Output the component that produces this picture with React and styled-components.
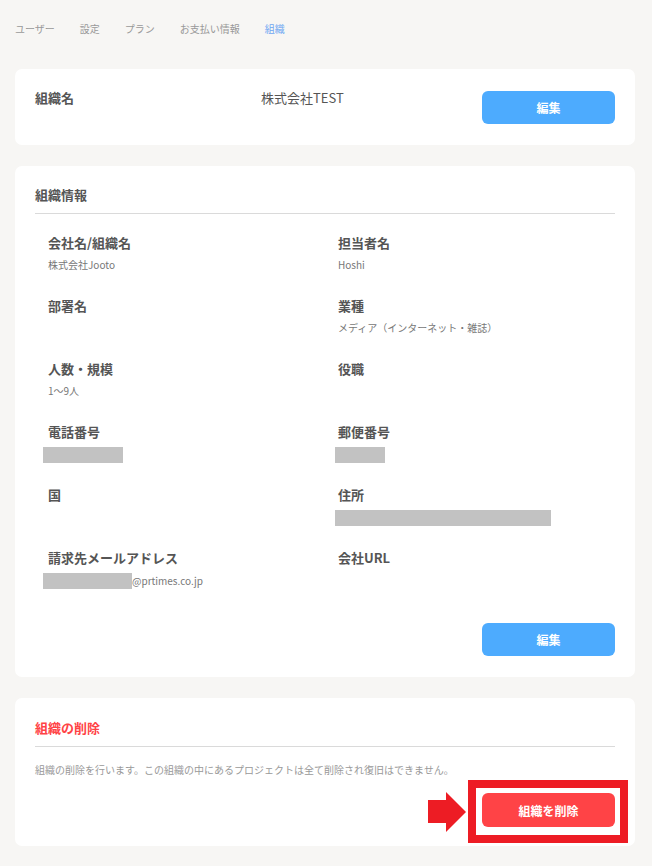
import React from 'react'
import styled, { createGlobalStyle } from 'styled-components'

const GlobalStyle = createGlobalStyle`
  body {
    margin: 0;
    background: #f7f6f4;
    font-family: "Noto Sans CJK JP", "Noto Sans", sans-serif;
    color: #555;
  }
`

const Page = styled.div`
  padding: 0 17px 21px 15px;
`

const Tabs = styled.nav`
  display: flex;
  height: 56px;
  align-items: center;
  font-size: 10px;
`

const Tab = styled.span`
  color: ${(p) => (p.$active ? '#6fa6f2' : '#999')};
  margin-right: ${(p) => p.$gap}px;
`

const Card = styled.section`
  background: #fff;
  border-radius: 7px;
  padding: ${(p) => p.$pad || '20px 20px 21px'};
  margin-top: ${(p) => p.$top || 21}px;
`

const NameRow = styled.div`
  display: flex;
  align-items: flex-start;
`

const NameLabel = styled.div`
  width: 226px;
  font-size: 13px;
  font-weight: 700;
  line-height: 18px;
  color: #555;
`

const NameValue = styled.div`
  flex: 1;
  font-size: 13px;
  line-height: 18px;
  color: #555;
`

const Button = styled.button`
  width: 133px;
  height: ${(p) => p.$h || 33}px;
  border: none;
  border-radius: 6px;
  background: ${(p) => (p.$danger ? '#ff4346' : '#4dabfe')};
  color: #fff;
  font-family: inherit;
  font-size: 12px;
  font-weight: 700;
  cursor: pointer;
`

const EditTop = styled(Button)`
  margin-top: 2px;
`

const SectionTitle = styled.h2`
  margin: 0;
  font-size: 13px;
  font-weight: 700;
  line-height: 18px;
  padding-bottom: 9px;
  border-bottom: 1px solid #dadada;
  color: ${(p) => (p.$danger ? '#ff4346' : '#555')};
`

const InfoGrid = styled.div`
  display: grid;
  grid-template-columns: 1fr 1fr;
  margin-top: 20px;
`

const Cell = styled.div`
  height: 63px;
  padding-left: 13px;
`

const Label = styled.div`
  font-size: 13px;
  font-weight: 700;
  line-height: 18px;
  color: #555;
`

const Value = styled.div`
  margin-top: 6px;
  font-size: 10px;
  line-height: 14px;
  color: #777;
  display: flex;
  align-items: center;
`

const Redact = styled.span`
  display: inline-block;
  height: 16px;
  background: #c2c2c2;
  margin-left: ${(p) => p.$ml || -5}px;
  width: ${(p) => p.$w}px;
`

const Footer = styled.div`
  display: flex;
  justify-content: flex-end;
  margin-top: ${(p) => p.$top}px;
`

const Desc = styled.p`
  margin: 16px 0 0;
  font-size: 10px;
  line-height: 14px;
  color: #999;
`

const Highlight = styled.div`
  position: relative;
`

const Frame = styled.div`
  position: absolute;
  left: -14px;
  right: -13px;
  top: -13px;
  bottom: -16px;
  border: 8px solid #ed1c24;
  pointer-events: none;
`

const Arrow = styled.svg`
  position: absolute;
  left: -54px;
  top: -1px;
`

const fields = [
  ['会社名/組織名', '株式会社Jooto'],
  ['担当者名', 'Hoshi'],
  ['部署名', ''],
  ['業種', 'メディア（インターネット・雑誌）'],
  ['人数・規模', '1〜9人'],
  ['役職', ''],
  ['電話番号', <Redact key="p" $w={80} />],
  ['郵便番号', <Redact key="z" $w={50} $ml={-3} />],
  ['国', ''],
  ['住所', <Redact key="a" $w={216} $ml={-3} />],
  ['請求先メールアドレス', <><Redact $w={89} />@prtimes.co.jp</>],
  ['会社URL', ''],
]

const tabs = [
  ['ユーザー', 25],
  ['設定', 25],
  ['プラン', 25],
  ['お支払い情報', 25],
  ['組織', 0, true],
]

export default function App() {
  return (
    <>
      <GlobalStyle />
      <Page>
        <Tabs>
          {tabs.map(([t, g, a]) => (
            <Tab key={t} $gap={g} $active={a}>{t}</Tab>
          ))}
        </Tabs>

        <Card $top={13}>
          <NameRow>
            <NameLabel>組織名</NameLabel>
            <NameValue>株式会社TEST</NameValue>
            <EditTop>編集</EditTop>
          </NameRow>
        </Card>

        <Card>
          <SectionTitle>組織情報</SectionTitle>
          <InfoGrid>
            {fields.map(([label, value]) => (
              <Cell key={label}>
                <Label>{label}</Label>
                <Value>{value}</Value>
              </Cell>
            ))}
          </InfoGrid>
          <Footer $top={11}>
            <Button>編集</Button>
          </Footer>
        </Card>

        <Card $pad="21px 20px 19px">
          <SectionTitle $danger>組織の削除</SectionTitle>
          <Desc>組織の削除を行います。この組織の中にあるプロジェクトは全て削除され復旧はできません。</Desc>
          <Footer $top={16}>
            <Highlight>
              <Arrow width="40" height="40" viewBox="0 0 40 40">
                <path d="M0 8 H18 V0 L38 20 L18 40 V31 H0 Z" fill="#ed1c24" />
              </Arrow>
              <Frame />
              <Button $danger $h={34}>組織を削除</Button>
            </Highlight>
          </Footer>
        </Card>
      </Page>
    </>
  )
}
